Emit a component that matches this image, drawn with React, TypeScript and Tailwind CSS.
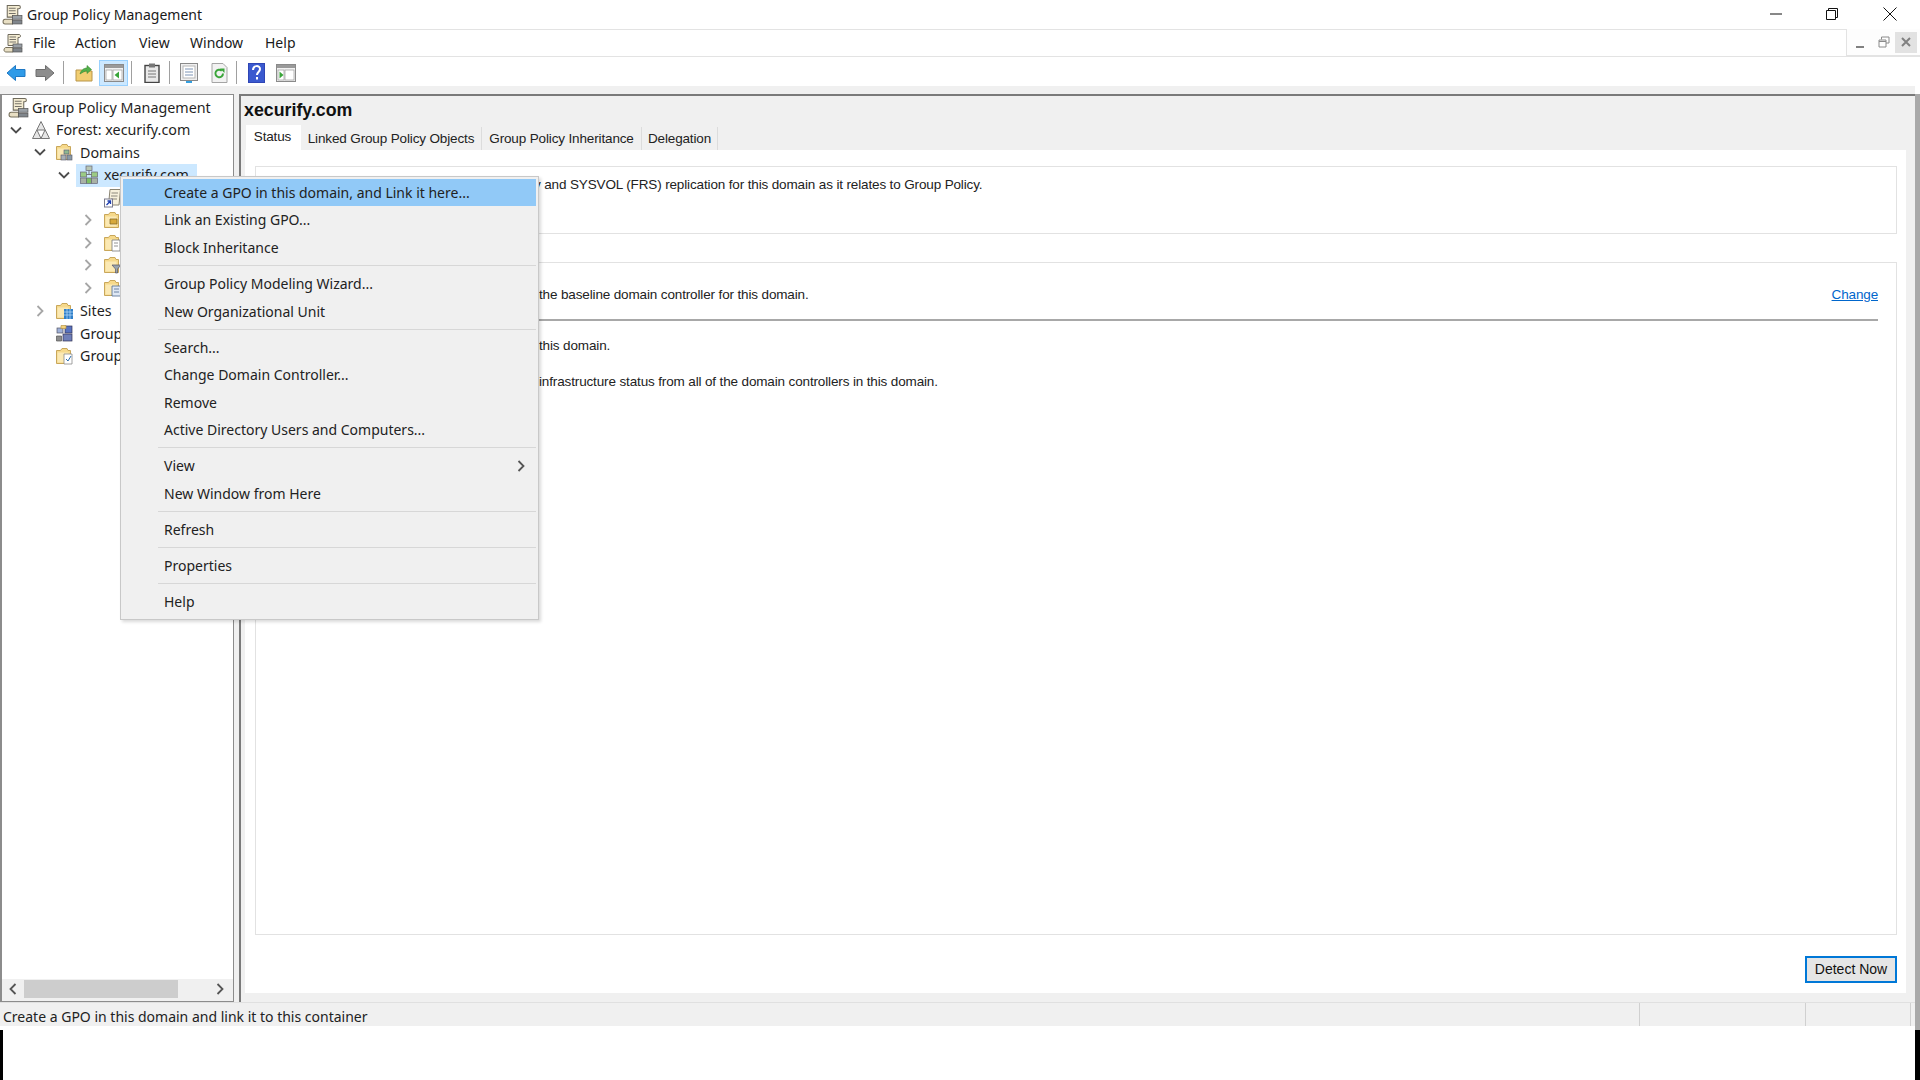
import type { ReactNode } from 'react';

const UI = "font-['Noto_Sans',sans-serif]";
const CLASSIC = "font-['Liberation_Sans',sans-serif]";

/* ---------- icons ---------- */

function ScrollIcon({ className = 'w-5 h-5' }: { className?: string }) {
  return (
    <svg viewBox="0 0 20 20" className={className}>
      <path d="M5 1.5h11c1 0 1.5.7 1.5 1.5s-.5 1.5-1.5 1.5H15v8H5z" fill="#f4ecd2" stroke="#6f6a5c" />
      <path d="M6.5 4h6.5M6.5 6.5h6.5M6.5 9h6.5" stroke="#77736a" />
      <path d="M1 17c0-1.500 1-2.500 2-2.500h7V19H3c-1 0-2-.8-2-2z" fill="#e8dfc4" stroke="#77705c" />
      <rect x="10" y="11" width="9" height="3.500" fill="#9aa0a6" stroke="#555" strokeWidth=".7" />
      <rect x="10" y="15.500" width="9" height="3.500" fill="#80868c" stroke="#555" strokeWidth=".7" />
    </svg>
  );
}

function ForestIcon() {
  return (
    <svg viewBox="0 0 20 20" className="w-[20px] h-[20px]">
      <path d="M10 1.500 18.500 18.500h-17z" fill="#e6e6e6" stroke="#777" />
      <path d="M6 10h8l-4 8.500z" fill="#fff" stroke="#777" />
    </svg>
  );
}

function FolderIcon({ children }: { children?: ReactNode }) {
  return (
    <svg viewBox="0 0 20 20" className="w-[20px] h-[20px]">
      <path d="M1.500 17.500V4.500h4l1.500-2h5l1 2h2.500v13z" fill="#f6d98b" stroke="#c9a75a" />
      <path d="M2.500 6.500h11v10h-11z" fill="#fbe9b4" />
      {children}
    </svg>
  );
}

function Servers() {
  return (
    <g>
      <rect x="9" y="8" width="5" height="4" fill="#8fb88f" stroke="#557" strokeWidth=".6" />
      <rect x="6" y="13" width="5" height="5" fill="#a7afb5" stroke="#556" strokeWidth=".6" />
      <rect x="12" y="13" width="5" height="5" fill="#8a9aa5" stroke="#556" strokeWidth=".6" />
    </g>
  );
}

function DomainIcon() {
  return (
    <svg viewBox="0 0 20 20" className="w-[20px] h-[20px]">
      <path d="M10 5v4M4.500 9.500h11" stroke="#777" />
      <rect x="7" y="1" width="6" height="4.500" fill="#b9c7b4" stroke="#667" strokeWidth=".7" />
      <rect x="1.500" y="7" width="6" height="5" fill="#9ccb85" stroke="#667" strokeWidth=".7" />
      <rect x="12.500" y="7" width="6" height="5" fill="#9ccb85" stroke="#667" strokeWidth=".7" />
      <rect x="1.500" y="13" width="6" height="5.500" fill="#a9b2a6" stroke="#667" strokeWidth=".7" />
      <rect x="7.500" y="13" width="5" height="5.500" fill="#7fbf64" stroke="#667" strokeWidth=".7" />
      <rect x="12.500" y="13" width="6" height="5.500" fill="#a9b2a6" stroke="#667" strokeWidth=".7" />
    </svg>
  );
}

function LinkScrollIcon() {
  return (
    <svg viewBox="0 0 20 20" className="w-[20px] h-[20px]">
      <path d="M7 1.500h10.500L16 17H5.500z" fill="#f7f1dc" stroke="#8a8472" />
      <path d="M8.500 5h6.500M8 8h6.500M8 11h6" stroke="#8d897c" />
      <rect x="1.500" y="11" width="8" height="8" fill="#fff" stroke="#7a7a8c" />
      <path d="M3.500 17 7 13.500M4.500 13h3v3" stroke="#1f3fb0" strokeWidth="1.300" fill="none" />
    </svg>
  );
}

function GroupPolicyObjectIcon() {
  return (
    <svg viewBox="0 0 20 20" className="w-[20px] h-[20px]">
      <rect x="2" y="5" width="6" height="5" fill="#9fb1d8" stroke="#556" strokeWidth=".7" />
      <rect x="10" y="3" width="7" height="7" fill="#5872bf" stroke="#335" strokeWidth=".7" />
      <path d="M6 2.500h5v3H6z" fill="#f3d27a" stroke="#b8954a" strokeWidth=".7" />
      <rect x="8" y="11" width="9" height="7" fill="#6f7fb8" stroke="#335" strokeWidth=".7" />
      <path d="M1.500 13h5v5h-5z" fill="#8c8c8c" stroke="#555" strokeWidth=".7" />
    </svg>
  );
}

function ChevronDown() {
  return (
    <svg viewBox="0 0 12 12" className="w-[12px] h-[12px]">
      <path d="M1 3.500 6 8.500l5-5" fill="none" stroke="#4d4d4d" strokeWidth="1.800" />
    </svg>
  );
}

function ChevronRight({ color = '#a6a6a6' }: { color?: string }) {
  return (
    <svg viewBox="0 0 12 12" className="w-[12px] h-[12px]">
      <path d="M3.500 1 8.500 6l-5 5" fill="none" stroke={color} strokeWidth="1.800" />
    </svg>
  );
}

function NavArrow({ fill, stroke, flip }: { fill: string; stroke: string; flip?: boolean }) {
  return (
    <svg viewBox="0 0 20 18" className={flip ? 'w-[20px] h-[18px] -scale-x-100' : 'w-[20px] h-[18px]'}>
      <path d="M1 9 9.500 1.500V5.500h9.500v7H9.500v4z" fill={fill} stroke={stroke} />
    </svg>
  );
}

function PaneToggleIcon({ right }: { right?: boolean }) {
  return (
    <svg viewBox="0 0 20 18" className="w-[20px] h-[18px]">
      <rect x=".5" y=".5" width="19" height="17" fill="#f2f2f2" stroke="#8a8a8a" />
      <rect x="1" y="1" width="18" height="3" fill="#9a9a9a" />
      <rect x="2" y="6" width="6" height="10" fill="#fff" stroke="#9b9b9b" strokeWidth=".7" />
      <rect x="9" y="6" width="9" height="10" fill="#fff" stroke="#9b9b9b" strokeWidth=".7" />
      {right ? (
        <path d="M3.500 7.500v7L7.500 11z" fill="#3aa53a" />
      ) : (
        <path d="M15 7.500v7L10.500 11z" fill="#3aa53a" />
      )}
    </svg>
  );
}

function ToolbarSep() {
  return <div className="w-[1px] h-[23px] bg-[#a0a0a0]" />;
}

/* ---------- data ---------- */

type MenuRow = { label: string; active?: boolean; more?: boolean };

const CONTEXT_MENU: MenuRow[][] = [
  [
    { label: 'Create a GPO in this domain, and Link it here...', active: true },
    { label: 'Link an Existing GPO...' },
    { label: 'Block Inheritance' },
  ],
  [{ label: 'Group Policy Modeling Wizard...' }, { label: 'New Organizational Unit' }],
  [
    { label: 'Search...' },
    { label: 'Change Domain Controller...' },
    { label: 'Remove' },
    { label: 'Active Directory Users and Computers...' },
  ],
  [{ label: 'View', more: true }, { label: 'New Window from Here' }],
  [{ label: 'Refresh' }],
  [{ label: 'Properties' }],
  [{ label: 'Help' }],
];

const INDENT = ['pl-[2px]', 'pl-[8px]', 'pl-[32px]', 'pl-[56px]', 'pl-[80px]'];

type TreeRowData = {
  level: number;
  label?: string;
  icon: ReactNode;
  toggle?: 'open' | 'closed';
  selected?: boolean;
};

const TREE: TreeRowData[] = [
  { level: 1, label: 'Forest: xecurify.com', icon: <ForestIcon />, toggle: 'open' },
  { level: 2, label: 'Domains', icon: <FolderIcon><Servers /></FolderIcon>, toggle: 'open' },
  { level: 3, label: 'xecurify.com', icon: <DomainIcon />, toggle: 'open', selected: true },
  { level: 4, icon: <LinkScrollIcon /> },
  {
    level: 4,
    icon: <FolderIcon><path d="M7 9h7v5H7z" fill="#d8a93c" stroke="#7d6220" strokeWidth=".7" /></FolderIcon>,
    toggle: 'closed',
  },
  {
    level: 4,
    icon: <FolderIcon><path d="M9 7h8v11H9z M11 10h4M11 13h4" fill="#fff" stroke="#777" strokeWidth=".8" /></FolderIcon>,
    toggle: 'closed',
  },
  {
    level: 4,
    icon: <FolderIcon><path d="M9 10h9l-3.500 4v4h-2v-4z" fill="#9aa4ad" stroke="#556" strokeWidth=".7" /></FolderIcon>,
    toggle: 'closed',
  },
  {
    level: 4,
    icon: <FolderIcon><path d="M9 8h9v10H9z M11 11h5M11 14h5" fill="#dfe8f4" stroke="#4f6b8f" strokeWidth=".8" /></FolderIcon>,
    toggle: 'closed',
  },
  {
    level: 2,
    label: 'Sites',
    icon: (
      <FolderIcon>
        <path d="M9 8h9v10H9z" fill="#2f7fc9" />
        <path d="M12 8v10M15 8v10M9 11h9M9 14h9" stroke="#bfe0fa" strokeWidth=".7" />
      </FolderIcon>
    ),
    toggle: 'closed',
  },
  { level: 2, label: 'Group', icon: <GroupPolicyObjectIcon /> },
  {
    level: 2,
    label: 'Group',
    icon: (
      <FolderIcon>
        <path d="M9 8h8v10H9z" fill="#fff" stroke="#8a8a8a" strokeWidth=".8" />
        <path d="M11 13l2 2 3-5" fill="none" stroke="#2c6fb0" strokeWidth="1" />
      </FolderIcon>
    ),
  },
];

/* ---------- chrome ---------- */

function TitleBar() {
  return (
    <div className={`flex h-[29px] items-center bg-white ${UI}`}>
      <ScrollIcon className="ml-[2px] w-[21px] h-[21px]" />
      <span className="ml-[4px] text-[14px] text-[#1a1a1a]">Group Policy Management</span>
      <div className="ml-auto flex items-center pb-[2px]">
        <svg viewBox="0 0 12 12" className="w-[12px] h-[12px]"><path d="M0 6h12" stroke="#111" /></svg>
        <svg viewBox="0 0 12 12" className="ml-[44px] w-[12px] h-[12px]">
          <path d="M.5 2.500h9v9h-9zM2.500 2.500v-2h9v9h-2" fill="none" stroke="#111" />
        </svg>
        <svg viewBox="0 0 14 14" className="ml-[45px] mr-[23px] w-[14px] h-[14px]">
          <path d="M.5.500l13 13M13.500.500l-13 13" stroke="#111" />
        </svg>
      </div>
    </div>
  );
}

function MenuBar() {
  return (
    <div className="flex h-[28px]">
      <div className={`flex flex-1 items-center border-y border-r border-[#e3e3e3] pb-[1px] text-[14px] text-[#1a1a1a] ${UI}`}>
        <ScrollIcon className="ml-[3px] w-[20px] h-[20px]" />
        <span className="ml-[10px] w-[42px]">File</span>
        <span className="w-[64px]">Action</span>
        <span className="w-[51px]">View</span>
        <span className="w-[75px]">Window</span>
        <span>Help</span>
      </div>
      <div className="flex w-[73px] items-center border-b-2 border-[#e3e3e3] bg-[#fdfdfd] pl-[3px]">
        <div className="flex h-[21px] w-[20px] items-end justify-center pb-[5px]">
          <div className="h-[2px] w-[8px] bg-[#808080]" />
        </div>
        <svg viewBox="0 0 12 12" className="ml-[8px] w-[12px] h-[12px]">
          <path d="M3.500 3.500V1h7.500v6H8M1 4h7v7H1z M1 5.500h7" fill="none" stroke="#8a8a8a" />
        </svg>
        <div className="ml-[5px] flex h-[21px] w-[22px] items-center justify-center bg-[#e2e2e2]">
          <svg viewBox="0 0 10 10" className="w-[10px] h-[10px]">
            <path d="M1 1l8 8M9 1 1 9" stroke="#808080" strokeWidth="2" />
          </svg>
        </div>
      </div>
    </div>
  );
}

function Toolbar() {
  return (
    <div className="flex h-[29px] items-center bg-white pt-[2px]">
      <div className="ml-[6px]"><NavArrow fill="#2f9be8" stroke="#1f78c4" /></div>
      <div className="ml-[9px]"><NavArrow fill="#8d8d8d" stroke="#6e6e6e" flip /></div>
      <div className="ml-[8px]"><ToolbarSep /></div>
      <svg viewBox="0 0 18 18" className="ml-[11px] w-[18px] h-[18px]">
        <path d="M1 6h6l1 1h9v10H1z" fill="#f2ce72" stroke="#b8954a" />
        <path d="M5 10c1-4 4-6 7-6V1.500l4.500 4-4.500 4V7C10 7 8 8 5 10z" fill="#52b04a" stroke="#3a8a34" strokeWidth=".6" />
      </svg>
      <div className="ml-[6px] flex h-[26px] w-[29px] items-center justify-center border border-[#99d1ff] bg-[#cce8ff]">
        <PaneToggleIcon />
      </div>
      <div className="ml-[3px]"><ToolbarSep /></div>
      <svg viewBox="0 0 16 20" className="ml-[12px] w-[16px] h-[20px]">
        <rect x="1" y="2.500" width="14" height="17" fill="#e9e9e9" stroke="#444" strokeWidth="1.400" />
        <rect x="5" y=".5" width="6" height="4" fill="#777" />
        <path d="M4 8h8M4 11h8M4 14h8" stroke="#777" />
      </svg>
      <div className="ml-[9px]"><ToolbarSep /></div>
      <svg viewBox="0 0 18 20" className="ml-[10px] w-[18px] h-[20px]">
        <rect x=".5" y=".5" width="17" height="17" fill="#f0f0f0" stroke="#8a8a8a" />
        <rect x="3" y="3" width="12" height="12" fill="#fff" stroke="#b5b5b5" />
        <path d="M5 6h8M5 9h8M5 12h8" stroke="#7d94b5" />
        <path d="M6 19h6" stroke="#35a0e0" strokeWidth="2" />
      </svg>
      <svg viewBox="0 0 17 20" className="ml-[13px] w-[17px] h-[20px]">
        <path d="M1 .5h11l4 4v15H1z" fill="#f2f2f2" stroke="#a5a5a5" />
        <path d="M12 10.500a3.800 3.800 0 1 1-1.200-2.800" fill="none" stroke="#3aa53a" strokeWidth="2" />
        <path d="M9 5.500h4.500V10z" fill="#3aa53a" />
      </svg>
      <div className="ml-[8px]"><ToolbarSep /></div>
      <svg viewBox="0 0 17 20" className="ml-[11px] w-[17px] h-[20px]">
        <rect width="17" height="20" fill="#2f45b5" />
        <rect x="1" y="1" width="15" height="18" fill="#3a59cf" />
        <path d="M5 7c0-5 7-5 7-1 0 3-3 3-3 6" fill="none" stroke="#fff" strokeWidth="2" />
        <rect x="8" y="14" width="2" height="2.500" fill="#fff" />
      </svg>
      <div className="ml-[11px]"><PaneToggleIcon right /></div>
    </div>
  );
}

/* ---------- left tree ---------- */

function TreeRow({ row }: { row: TreeRowData }) {
  return (
    <div className={`flex h-[22.6px] items-center ${INDENT[row.level]}`}>
      <div className="flex w-[12px] shrink-0 justify-center">
        {row.toggle === 'open' && <ChevronDown />}
        {row.toggle === 'closed' && <ChevronRight />}
      </div>
      <div
        className={`ml-[6px] flex h-[23px] shrink-0 items-center pl-[3px] whitespace-nowrap ${
          row.selected ? 'bg-[#cce8ff] pr-[8px]' : 'pr-[5px]'
        }`}
      >
        {row.icon}
        {row.label && <span className="ml-[5px]">{row.label}</span>}
      </div>
    </div>
  );
}

function TreePane() {
  return (
    <div className="flex w-[234px] flex-col border-y border-r border-l-2 border-[#8c8c8c] bg-white">
      <div className={`flex-1 overflow-hidden pt-[1px] text-[14.3px] text-[#1f1f1f] ${UI}`}>
        <div className="flex h-[22.6px] items-center pl-[6px]">
          <ScrollIcon className="w-[21px] h-[21px]" />
          <span className="ml-[3px] whitespace-nowrap">Group Policy Management</span>
        </div>
        {TREE.map((row, i) => (
          <TreeRow key={i} row={row} />
        ))}
      </div>
      <div className="flex h-[22px] items-center bg-[#f0f0f0] pb-[2px] pl-[5px]">
        <svg viewBox="0 0 12 12" className="w-[12px] h-[12px] rotate-180">
          <path d="M3.500 1 8.500 6l-5 5" fill="none" stroke="#555" strokeWidth="1.800" />
        </svg>
        <div className="ml-[5px] h-[18px] w-[154px] bg-[#cdcdcd]" />
        <div className="ml-[36px]"><ChevronRight color="#555" /></div>
      </div>
    </div>
  );
}

/* ---------- right pane ---------- */

function DomainPane() {
  return (
    <div className="ml-[5px] flex flex-1 flex-col border-t-2 border-l-2 border-[#7a7a7a] bg-[#f0f0f0] pl-[4px] pr-[9px]">
      <div className={`-ml-[1px] flex h-[29px] items-center text-[17.8px] font-bold text-[#111] ${CLASSIC}`}>xecurify.com</div>
      <div className={`flex h-[25px] items-end pl-[1px] text-[13.5px] tracking-[-0.14px] text-[#222] ${CLASSIC}`}>
        <div className="flex h-[25px] w-[55px] items-center justify-center bg-white pb-[1px] pr-[2px]">Status</div>
        <div className="flex h-[23px] w-[181px] items-center justify-center border-r border-[#dcdcdc] pt-[1px]">Linked Group Policy Objects</div>
        <div className="flex h-[23px] w-[160px] items-center justify-center border-r border-[#dcdcdc] pt-[1px]">Group Policy Inheritance</div>
        <div className="flex h-[23px] w-[76px] items-center justify-center border-r border-[#dcdcdc] pt-[1px]">Delegation</div>
      </div>
      <div className={`flex h-[843px] flex-col bg-white pl-[10px] pr-[9px] pt-[16px] text-[13.5px] tracking-[-0.14px] text-[#222] ${CLASSIC}`}>
        <div className="flex h-[68px] border border-[#e2e2e2] pl-[278px] pt-[8px]">
          <span>y and SYSVOL (FRS) replication for this domain as it relates to Group Policy.</span>
        </div>
        <div className="mt-[28px] flex h-[673px] flex-col border border-[#e2e2e2] pl-[283px] pr-[18px]">
          <div className="flex h-[57.5px] items-end border-b-2 border-[#a8a8a8] pb-[13.5px]">
            <span>the baseline domain controller for this domain.</span>
            <span className="ml-auto text-[#0066cc] underline">Change</span>
          </div>
          <div className="mt-[15.5px]">this domain.</div>
          <div className="mt-[16px]">infrastructure status from all of the domain controllers in this domain.</div>
        </div>
        <div className="mt-[21px] flex justify-end">
          <div className="flex h-[27px] w-[92px] items-center justify-center border-2 border-[#0078d7] bg-[#e5e5e5] text-[14px] tracking-normal text-[#111]">
            Detect Now
          </div>
        </div>
      </div>
    </div>
  );
}

function StatusBar() {
  return (
    <div className={`flex h-[24px] items-center border-t border-[#e0e0e0] bg-[#f0f0f0] text-[14px] text-[#222] ${UI}`}>
      <span className="ml-[3px] pt-[4px]">Create a GPO in this domain and link it to this container</span>
      <div className="ml-auto h-full w-[166px] border-l border-[#d0d0d0]" />
      <div className="h-full w-[106px] border-x border-[#d0d0d0]" />
      <div className="w-[4px]" />
    </div>
  );
}

function ContextMenu() {
  return (
    <div className={`absolute left-[120px] top-[176px] h-[444px] w-[419px] border border-[#c8c8c8] bg-[#f0f0f0] px-[2px] pt-[1.5px] text-[14px] text-[#222] shadow-[2px_2px_3px_rgba(0,0,0,0.15)] ${UI}`}>
      {CONTEXT_MENU.map((group, g) => (
        <div key={g}>
          {g > 0 && (
            <div className="flex h-[8.4px] items-center pl-[35px]">
              <div className="h-[1px] flex-1 bg-[#d7d7d7]" />
            </div>
          )}
          {group.map((item) => (
            <div
              key={item.label}
              className={`flex h-[27.6px] items-center pl-[41px] pr-[9px] ${item.active ? 'bg-[#91c9f7]' : ''}`}
            >
              <span>{item.label}</span>
              {item.more && (
                <span className="ml-auto">
                  <ChevronRight color="#555" />
                </span>
              )}
            </div>
          ))}
        </div>
      ))}
    </div>
  );
}

export default function App() {
  return (
    <div className="relative flex h-[1080px] w-[1920px] flex-col overflow-hidden bg-white">
      <TitleBar />
      <MenuBar />
      <Toolbar />
      <div className="flex h-[944px]">
        <div className="flex flex-1 flex-col">
          <div className="h-[8px] bg-[#f0f0f0]" />
          <div className="flex h-[908px] bg-[#f0f0f0]">
            <TreePane />
            <DomainPane />
          </div>
          <StatusBar />
        </div>
        <div className="mt-[8px] w-[5px] bg-[#a9a9a9]" />
      </div>
      <div className="flex h-[50px] justify-between">
        <div className="w-[3px] bg-black" />
        <div className="w-[5px] bg-black" />
      </div>
      <ContextMenu />
    </div>
  );
}
